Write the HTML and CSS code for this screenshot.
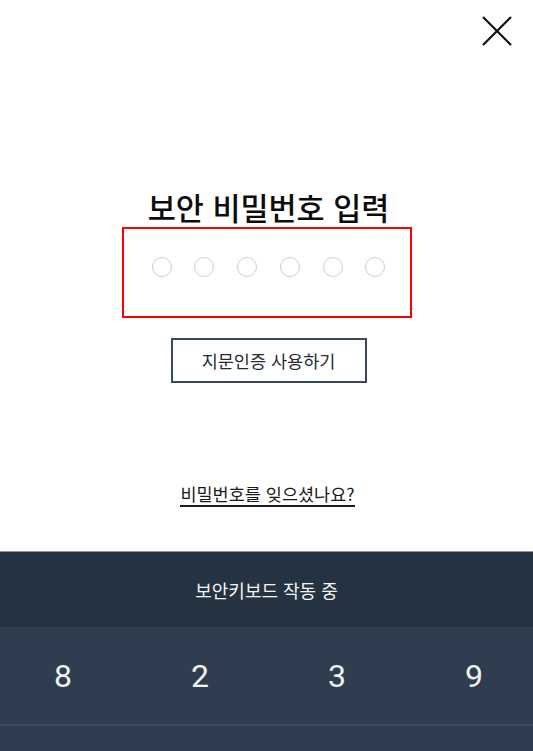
FILE: index.html
```html
<!DOCTYPE html>
<html lang="ko">
<head>
  <meta charset="UTF-8">
  <meta name="viewport" content="width=device-width, initial-scale=1.0">
  <title>보안 비밀번호 입력</title>
  <link rel="stylesheet" href="styles.css">
</head>
<body>
  <div class="top-bar">
    <button class="close-btn" aria-label="닫기">
      <svg width="30" height="30" viewBox="0 0 30 30">
        <path d="M1 1 L29 29 M29 1 L1 29" stroke="#111" stroke-width="2.2" fill="none"/>
      </svg>
    </button>
  </div>

  <h1 class="title">보안 비밀번호 입력</h1>

  <div class="pin-box">
    <span class="dot"></span>
    <span class="dot"></span>
    <span class="dot"></span>
    <span class="dot"></span>
    <span class="dot"></span>
    <span class="dot"></span>
  </div>

  <div class="center">
    <button class="finger-btn">지문인증 사용하기</button>
  </div>

  <div class="center">
    <a class="forgot" href="#">비밀번호를 잊으셨나요?</a>
  </div>

  <div class="keyboard">
    <div class="kb-head">보안키보드 작동 중</div>
    <div class="kb-row">
      <span class="key">8</span>
      <span class="key">2</span>
      <span class="key">3</span>
      <span class="key">9</span>
    </div>
    <div class="kb-row">
      <span class="key"></span>
      <span class="key"></span>
      <span class="key"></span>
      <span class="key"></span>
    </div>
  </div>
</body>
</html>
```

FILE: styles.css
```css
body {
  margin: 0;
  height: 751px;
  overflow: hidden;
  background: #fff;
  font-family: "Noto Sans CJK KR", "Noto Sans", sans-serif;
  color: #111;
}
.top-bar {
  display: flex;
  justify-content: flex-end;
  padding: 16px 21px 0 0;
}
.close-btn {
  background: none;
  border: none;
  padding: 0;
  width: 30px;
  height: 30px;
  cursor: pointer;
}
.close-btn svg {
  display: block;
}
.title {
  margin: 141px 0 0 4px;
  text-align: center;
  font-size: 30.5px;
  line-height: 40px;
  font-weight: 500;
  color: #0c0c0c;
}
.pin-box {
  box-sizing: border-box;
  width: 290px;
  height: 91px;
  margin: 0 auto;
  border: 2px solid #f00;
  display: flex;
  align-items: center;
  justify-content: center;
  gap: 22.7px;
  padding: 0 0 12px 4px;
}
.dot {
  box-sizing: border-box;
  width: 20px;
  height: 20px;
  border: 1.3px solid #cfcfcf;
  border-radius: 50%;
}
.center {
  display: flex;
  justify-content: center;
}
.finger-btn {
  box-sizing: border-box;
  margin: 20px 0 0 4px;
  width: 196px;
  height: 45px;
  background: #fff;
  border: 2px solid #3b4858;
  font-family: inherit;
  font-size: 17.5px;
  color: #262b32;
  cursor: pointer;
}
.forgot {
  margin: 99px 0 0 2px;
  display: inline-block;
  line-height: 23px;
  border-bottom: 2px solid #1a1a1a;
  font-size: 17.5px;
  color: #1a1a1a;
  text-decoration: none;
}
.keyboard {
  margin-top: 44px;
  border-top: 1px solid #8a9098;
}
.kb-head {
  height: 75px;
  background: #253241;
  color: #f4f4f4;
  font-size: 18px;
  display: flex;
  align-items: center;
  justify-content: center;
}
.kb-row {
  height: 97px;
  background: #2e3e50;
  display: grid;
  grid-template-columns: repeat(4, 126px);
  column-gap: 11px;
  border-bottom: 2px solid #3a4b5e;
}
.key {
  display: flex;
  align-items: center;
  justify-content: center;
  font-family: Roboto, sans-serif;
  font-size: 32px;
  color: #f2f2f2;
}
```
